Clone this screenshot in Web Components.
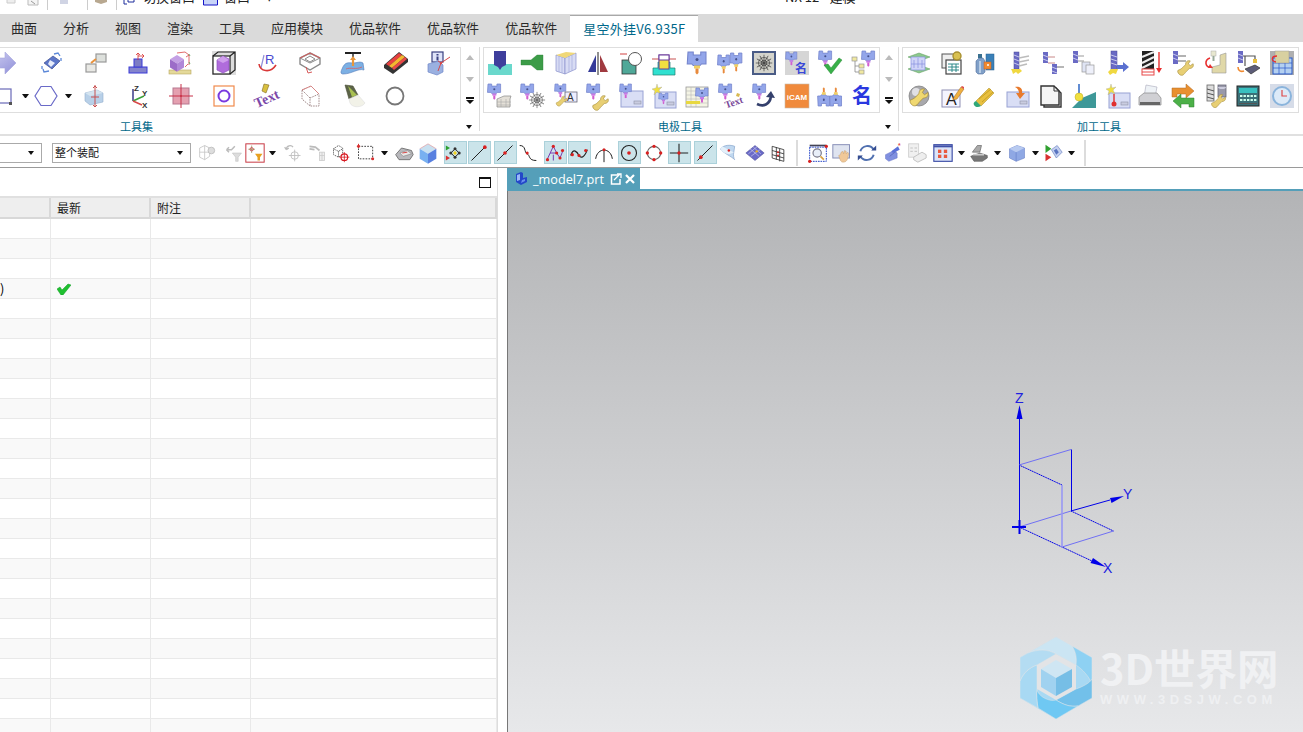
<!DOCTYPE html>
<html lang="zh"><head><meta charset="utf-8"><title>NX 12 - 建模</title>
<style>html,body{margin:0;height:100%;overflow:hidden;background:#fff;font-family:"Noto Sans CJK SC","Noto Sans",sans-serif}</style>
</head><body>
<nx-app>
  <nx-topbar></nx-topbar>
  <nx-tabs></nx-tabs>
  <nx-ribbon>
    <nx-group label="工具集" w="500" bx="481" ml="-20" chev="1" lo="84">
      <nx-strip origin="-20" items="arrowR@5 diamond@52 twoBox@96 baseBlock@138 rulerCube@180 wireCube@224 radius@267 wireTray@310 surfLift@353 stripes@396 infoBox@439"></nx-strip>
      <nx-strip origin="-20" items="rectC@0 caret@25 hexa@46 caret@68 blockAxis@94 xyz@137 pinkCross@181 orangeO@224 textPen@267 dotBox@310 lamp@353 ring@395"></nx-strip>
    </nx-group>
    <nx-group label="电极工具" w="419" bx="396" pl="4" chev="1" lo="2">
      <nx-strip origin="484" items="eDark@500 eGreen@533 book@566 mirror@598 tealCirc@631 yellowPit@664 e1@697 e2@730 web!!@764 eName@797 eCheck@830 eTree@863"></nx-strip>
      <nx-strip origin="484" items="eStack@500 eWeb@533 eAWrench@566 eWrench@598 eBox@631 eStarBox@664 eTable@697 eText@730 eArrow@764 icam@797 e2Up@830 nameBlue@863"></nx-strip>
    </nx-group>
    <nx-group label="加工工具" w="404" bx="396" pl="4" nosep="1" lo="4">
      <nx-strip origin="903" items="planes@919 docsGear@952 spray@985 drillLines@1018 drillSteps@1052 drillDocs@1083 drillArrow@1117 hatchArrow@1152 drillWrench@1183 machRed@1215 drillMach@1248 machGrid@1282"></nx-strip>
      <nx-strip origin="903" items="wrenchBall@919 aPen@952 eraser@985 boxArrow@1018 pages@1051 slope@1084 starBoxRed@1118 printer@1150 swap@1183 toolWrench@1216 calc@1248 clock@1282"></nx-strip>
    </nx-group>
  </nx-ribbon>
  <nx-toolbar>
    <nx-select w="52" ml="-10"></nx-select>
    <nx-select w="139" ml="10">整个装配</nx-select>
    <nx-strip origin="191" tool="1" items="tGhost1@208 tGhost2@234 tFilterBox@255 caret@272 tGhost3@293 tGhost4@317 tDotRed@341 tDashRect@366 caret@384 tBrick@404 tCube@428 tSnap!@455 tLineEnd!@479 tLineMid!@505 tCurve@528 tPts!@555 tWave!@579 tArc@604 tCenter!@629 tQuad@654 tCross!@679 tOnLine!@705 tFace@728 tMesh@755 tGrid@778 sep@797 tZoomBox@818 tHand@842 tRotate@867 tArrowBox@893 tGhost5@917 tLayout@943 caret@961 tPrintG@979 caret@997 tSolid@1017 caret@1035 tMark@1053 caret@1071 sep@1085"></nx-strip>
  </nx-toolbar>
  <nx-main>
    <nx-table></nx-table>
    <nx-viewport></nx-viewport>
  </nx-main>
</nx-app>
<script>
const P=(d,f,s,w)=>`<path d="${d}" fill="${f||'none'}"${s?` stroke="${s}" stroke-width="${w||1}"`:''}/>`;
const L=(d,s,w)=>P(d,'none',s,w);
const R=(x,y,w,h,f,s,sw)=>`<rect x="${x}" y="${y}" width="${w}" height="${h}" fill="${f||'none'}"${s?` stroke="${s}" stroke-width="${sw||1}"`:''}/>`;
const C=(x,y,r,f,s,sw)=>`<circle cx="${x}" cy="${y}" r="${r}" fill="${f||'none'}"${s?` stroke="${s}" stroke-width="${sw||1}"`:''}/>`;
const T=(x,y,z,f,t,b,extra)=>`<text x="${x}" y="${y}" font-size="${z}" fill="${f}" font-weight="${b||400}" font-family="Liberation Sans,Noto Sans CJK SC,sans-serif" ${extra||''}>${t}</text>`;
const G=(tx,ty,s,c)=>`<g transform="translate(${tx} ${ty}) scale(${s})">${c}</g>`;
const LG=(id,a,b)=>`<defs><linearGradient id="${id}" x1="0" y1="0" x2="1" y2="1"><stop offset="0" stop-color="${a}"/><stop offset="1" stop-color="${b}"/></linearGradient></defs>`;
const cube=(x,y,s,a,b,c)=>P(`M${x} ${y+s*.3}L${x+s*.5} ${y}L${x+s} ${y+s*.3}L${x+s*.5} ${y+s*.6}z`,a)+P(`M${x} ${y+s*.3}L${x+s*.5} ${y+s*.6}V${y+s*1.2}L${x} ${y+s*.9}z`,b)+P(`M${x+s} ${y+s*.3}L${x+s*.5} ${y+s*.6}V${y+s*1.2}L${x+s} ${y+s*.9}z`,c);
const E=(x,y,s,tip1,tip2)=>G(x,y,s,P('M0 0h3.5v2h5v-2h3.5v8h-3l-1 1h-4.500l-1-1h-3z','#93a6ea','#7484cc',.7)+C(6,5,1,'#44508a')+R(4,9,4,2,tip1||'#c47be6')+P('M5 11h2v3l-1 1-1-1z',tip2||'#d35fd0'));
const wrench=(x,y,s,c)=>G(x,y,s,P('M2 12c2-1 3-1 5-3l3-3c0-3 2-5 5-4l-2 3 2 2 3-2c1 3-1 5-4 5l-3 3c-2 2-2 3-4 4-3 1-6-3-5-5z',c||'#e8cf74','#a88f3c',.7));
const web=(x,y,s,c)=>G(x,y,s,[0,30,60,90,120,150].map(a=>`<line x1="-9" x2="9" transform="rotate(${a})" stroke="${c}" stroke-width=".8"/>`).join('')+C(0,0,3,'',c,.8)+C(0,0,6,'',c,.8));
const boxPanel=(x,y,w,h)=>R(x,y,w,h,'#d9def5','#98a2d4')+R(x+w-9,y+h-6,7,3,'#c9cce0','#8d90a6',.6);
const I={
arrowR:LG('a','#d4d4f4','#8f8fd8')+P('M-7 7h19V1l11 11-11 11v-6H-7z','url(#a)','#a4a4dc',.6),
diamond:P('M4 12l9-7 7 5-8 8z','#5c76c8','#3f4f90',.7)+P('M10 9l5 3-4 4-3-3z','#e8edfa')+L('M14 3l4-1 2 3M3 18l1 3 5-1M2 15v3M21 7v3','#5c88d8',1.3),
twoBox:R(12,3,10,8,'#dde0dc','#999',1.2)+R(2,13,10,8,'#e8e8e4','#999',1.2)+L('M7 12l5-4','#e8923c',2),
baseBlock:R(3,16,18,6,'#8484cc','#3a3ad8',1)+R(8,8,8,8,'#7c7cc4','#3a3ad8',1)+L('M12 9V2M12 2l-2 2M12 2l2 2M12 5h6M18 5l-2-2M18 5l-2 2','#d83030',.8),
rulerCube:R(1,19,22,4,'#e4d99a','#b8a860',.6)+cube(2,4,14,'#c4a0e4','#9c6cc8','#b088d8')+L('M9 2l8-1 4 3v10M21 4l-3 2M20 13l-3 3','#d84848',.8)+L('M21 3l1 2M21 11l1 2','#50a050',.8),
wireCube:R(0,0,24,24,'#dcdcdc')+R(1,5,17,18,'#fff','#222',1.2)+L('M1 5l5-4h17v18l-5 4M18 5l5-4','#222',1.2)+P('M5 9l6-4 6 3v11l-6 3-6-3z','#b06cdc','#8e50c0',.7)+P('M5 9l6 3 6-3-6-4z','#cf9eec'),
radius:T(10,13,13,'#4a4ad0','R',400)+L('M9 4l-3 13','#9090d8',1.2)+L('M4 13c1 7 11 10 17 1','#d83838',1.6),
wireTray:L('M12 2l10 5v6l-10 6-10-6V7z','#8a8a8a',1.4)+L('M2 7l10 5 10-5M7 8l5-3 5 3-5 3zM12 2v2','#8a8a8a',1)+L('M2 7l10-5 10 5','#d85858',1)+L('M8 16l2 6M10 22l4-1','#d85858',1),
surfLift:R(4,1,16,2,'#222')+L('M12 3v3','#222',1.4)+P('M1 18c3-8 7-6 11-6s7-2 10 0l1 7c-6-2-12 4-21 4-3 0-2-3-1-5z','#7cb0e4','#5078b8',.6)+L('M12 15V7','#e8963c',2.200)+P('M9 9l3-4 3 4z','#e8963c')+L('M5 18c4-2 10 1 16-2','#d86060',.8),
stripes:P('M0 14L15 1l9 7v3L9 23l-9-6z','#333')+P('M2 13L15 2l3 2L5 15z','#e84040')+P('M5 15L18 4l3 2L8 17z','#f4b830')+P('M8 17L21 6l2 2L10 19z','#e84848'),
infoBox:R(5,1,11,10,'#dfe3f8','#3a4080',1.2)+R(9.500,3,2,1.500,'#3a4080')+R(9.500,5.500,2,4,'#3a4080')+P('M1 13l11-3 4 4v7l-6 3-9-3z','#9ab0e0','#7088c8',.7)+L('M11 20l3-8 9-6M14 12l-3-2','#d84848',1)+C(14,12,1.200,'#d84848'),
rectC:R(1,5,22,14,'#fff','#6a6ab8',1.2)+R(21,18,3,3,'#555'),
hexa:P('M7 2.500h10L23 12l-6 9.500H7L1 12z','#fff','#6a6ac8',1.2),
blockAxis:P('M3 9l12-3 6 3v9l-13 3-5-4z','#b8d0e8','#94aecc',.6)+P('M3 9l5 3 13-3-6-3z','#d4e4f0')+L('M13 1v22M9 13l8 0','#c85050',1)+L('M11 4l2-2 2 2M11 21l2 2 2-2','#c85050',1),
xyz:L('M8 17V5','#3a3a8a',1.5)+L('M8 17l11-5','#3aa03a',1.5)+L('M8 17l9 4','#d84848',1.5)+T(9,7,8,'#333','Z',700)+T(17,12,8,'#333','Y',700)+T(17,24,8,'#333','X',700),
pinkCross:R(4,4,16,16,'#e4a0b0','#b87890',1)+L('M12 0v24M0 12h24','#c83048',1)+C(12,12,1,'#c83048'),
orangeO:R(2,2,20,20,'#fff','#f08a4c',1.2)+C(12,12,5.500,'#fff','#7a3ae0',2),
textPen:G(12,13,1,`<text transform="rotate(-24)" x="-14" y="6" font-size="14" font-weight="700" font-family="Liberation Serif,serif" fill="#7c48a8">Text</text>`)+P('M9 0l5 1-3 8-4-2z','#d8c040','#806820',.6),
dotBox:`<g stroke-dasharray="1.500 1">`+L('M4 6l9-4 8 8v12l-9 0-8-7zM4 6l8 8v8M12 14l9-4','#a08888',1)+`</g>`+L('M4 6l9-4 8 8','#d88888',1),
lamp:P('M4 1l8 1 5 9-9 4z','#5c6448','#484c34',.6)+P('M7 2l4 11 5-2','#a8c050')+P('M8 15l9-4 7 8c-3 5-13 5-15 0z','#f2f2e8','#ddd',.6),
ring:C(12,12,8.500,'#fff','#777',1.800),
eDark:R(0,13,24,11,'#6ad8cc')+P('M6 0h12v14l-4 2-2 3-2-3-4-2z','#3e3e9c'),
eGreen:P('M0 9h10l6-5h6v15h-6l-6-5H0z','#3c9c48','#2c8038',.4),
book:P('M2 4l9 3v16l-9-3z','#d8dcf4','#8a90cc',.7)+P('M22 2l-11 5v16l11-5z','#d8dcf4','#8a90cc',.7)+P('M2 4l10-3 10 1-11 5z','#f0d878')+L('M5 5v16M8 6v16M15 5v16M18 4v16','#a0a4d8',.6),
mirror:P('M10 4v17H2z','#343a98')+P('M14 4v17h8z','#a03a40')+L('M12 1v23','#222',1),
tealCirc:R(3,9,14,14,'#4fa898','#333',.8)+C(16,8,6.500,'#fff','#555',1)+L('M1 3h7','#d86060',1.2),
yellowPit:L('M0 8h24','#c85050',1)+P('M1 17h5v-6h12v6h5v7H1z','#30e0d0','#208070',.7)+R(7,4,10,14,'#f0e040','#6a3a9a',1)+R(7,4,10,5,'#fff','#6a3a9a',1),
e1:E(3,1,1.500,'#f0d060','#e88a3c'),
e2:`<g transform="translate(0 4) scale(.95 1.25)">${E(0,0,1,'#f0d060','#e88a3c')}</g><g transform="translate(12.500 2) scale(.95 1.25)">${E(0,0,1,'#f0d060','#e88a3c')}</g>`,
eName:R(0,0,24,24,'#d6d6d6')+E(1,1,.9)+T(10,22,12,'#3a48d8','名',700),
eCheck:E(1,0,1.050)+P('M6 14l4-1 3 4 8-10 3 2-11 14z','#38b048','#2a8a38',.5),
eTree:E(11,0,1.050)+R(1,6,5,4,'#f0e8a0','#999',.7)+R(8,13,5,4,'#f0e8a0','#999',.7)+R(8,19,5,4,'#f0e8a0','#999',.7)+L('M4 10v11h4M4 15h4','#888',.8),
eStack:E(0,0,1.050)+P('M9 15l7-3h7l-1 3v8H9z','#e4e0d8','#888',.7)+L('M9 18h14M9 21h14M13 15v8M18 15v8','#aaa',.6),
eWeb:E(0,0,1.050)+web(16,16,.9,'#666'),
eAWrench:E(1,0,.9)+R(11,8,12,10,'#eef','#667',.8)+T(13,17,10,'#333','A')+wrench(1,11,.65),
eWrench:E(1,0,1.050)+wrench(5,10,.95),
eBox:boxPanel(2,7,22,16)+E(1,0,.95),
eStarBox:boxPanel(3,8,21,16)+P('M5 0l1 4 4-1-3 3 2 4-4-2-3 3 1-4-3-2 4-1z','#f0e040','#aaa',.4)+E(7,9,.75),
eTable:R(1,3,22,20,'#f4f4e4','#999',.8)+L('M1 7h22M1 11h22M1 15h22M1 19h22M6 3v20M11 3v20','#bbb',.6)+R(1,17,14,3,'#e8d840')+E(11,4,1),
eText:E(1,0,1.050)+`<text transform="rotate(-20 15 20)" x="7" y="22" font-size="10" font-weight="700" font-family="Liberation Serif,serif" fill="#7a4a9a">Text</text>`+P('M19 9l3 1-1 3-3-1z','#d8b850'),
eArrow:E(1,0,1.050)+L('M5 20c6 3 13 1 14-8','#34406c',2.600)+P('M14 13l5-6 4 7z','#34406c'),
icam:R(0,0,24,24,'#f08a3c','#c8b8a8',.6)+T(12,15.500,8,'#fff','iCAM',700,'text-anchor="middle"'),
e2Up:`<g transform="translate(12 22) scale(.95 -1.25) translate(-12.500 0)">${E(0,0,1,'#f0d060','#e88a3c')}</g><g transform="translate(24 22) scale(.95 -1.25) translate(-12.500 0)">${E(0,0,1,'#f0d060','#e88a3c')}</g>`,
nameBlue:T(1,19,20,'#2a38e0','名',700),
planes:P('M1 6l11-4 11 4-11 4z','#8cc88c','#5a9a5a',.5)+P('M1 18l11-4 11 4-11 4z','#8cc88c','#5a9a5a',.5)+R(4,6,14,13,'#d0d4f8','#8890e0',.7)+L('M7 9v8M11 7v10M15 9v8M4 13h14','#8890e0',.7),
docsGear:R(2,3,12,14,'#eee','#555',1)+R(6,9,15,14,'#fff','#444',1.2)+L('M8 13h11M8 16h11M8 19h11M12 13v8M16 13v8','#2f8a8a',1)+C(17,5,4,'#d8c050','#a89030',1.400),
spray:P('M3 10l3-3h4l2 3v11l-2 2H5l-2-2z','#80a0c8','#5070a0',.6)+R(5,3,4,4,'#3a7090')+L('M7 10v12','#d0e0f0',1.400)+R(13,3,8,16,'#3a80b8','#2a6090',.5)+R(11,11,7,7,'#f08a30','#c86020',.5)+C(15,14,1,'#fff'),
drillLines:R(8,1,5,17,'#6a6ac4','#484898',.5)+L('M8 4l5 2M8 8l5 2M8 12l5 2','#c8c8ec',1)+P('M5 18h9l2 2-4 3-2-2-3 2-1-3z','#f0d840')+L('M13 7l10-2M13 11l10-2M13 15l8-2','#bcbcbc',1.600),
drillSteps:R(3,1,5,11,'#6a6ac4')+L('M3 4l5 2M3 8l5 2','#c8c8ec',1)+L('M8 6h7M8 12h7','#c88888',1)+R(12,13,5,10,'#6a6ac4')+L('M12 16l5 2M12 20l5 2','#c8c8ec',1)+L('M17 16h7','#999',1.400),
drillDocs:R(2,0,5,12,'#6a6ac4')+L('M2 3l5 2M2 7l5 2','#c8c8ec',1)+L('M7 5h6M7 10h6','#999',1)+R(11,11,8,10,'#dfe4f4','#999',.7)+R(15,14,8,9,'#eef0fa','#999',.7),
drillArrow:R(6,0,6,19,'#6a6ac4','#484898',.5)+L('M6 4l6 2M6 8l6 2M6 12l6 2','#c8c8ec',1)+P('M3 21l3-3h7l-2 5-3-1-3 2z','#f0d840')+P('M12 14h6v-3l6 5-6 5v-3h-6z','#5a70d0'),
hatchArrow:R(2,0,12,18,'#222')+L('M2 6l12-5M2 12l12-6M2 17l12-6','#eee',2)+R(2,18,12,6,'#fff','#e84848',1)+L('M2 21h12','#e84848',1)+L('M19 1v18','#e83030',1.400)+P('M16 17h6l-3 5z','#e83030'),
drillWrench:R(2,0,5,13,'#6a6ac4')+L('M2 3l5 2M2 7l5 2','#c8c8ec',1)+L('M7 5h8M7 10h8','#999',1.400)+wrench(5,8,.95),
machRed:P('M9 16l8-2V4l6-2v20H9z','#e0d8a8','#999',.6)+R(8,0,5,5,'#e8e8d0','#aaa',.5)+R(9.500,5,2,5,'#9a9')+L('M7 7C1 9 2 17 8 16','#e83030',1.600)+P('M7 13l3 4-5 0z','#e83030'),
drillMach:R(2,0,5,12,'#6a6ac4')+L('M2 3l5 2M2 7l5 2','#c8c8ec',1)+L('M7 5h12v4M9 5v10','#555',1.200)+R(17,8,4,4,'#e8c040')+P('M9 18l10-4 5 3-9 6z','#5c5c78','#333',.7)+L('M2 16c0 4 3 5 6 4','#f08a30',1.600),
machGrid:R(0,0,24,24,'#b0b0b0')+R(3,7,19,16,'#b4d0f0','#2858c8',1)+L('M3 12h19M3 17h19M9 7v16M15 7v16','#2858c8',.7)+R(5,0,14,12,'#d8d0a0','#999',.5)+L('M7 5C1 5 1 10 6 11','#e83030',1.400),
wrenchBall:C(12,12,10,'#a8a8ac','#777',.7)+C(9,8,4,'#e0e0e4')+wrench(1,3,1.100,'#f0d870'),
aPen:R(2,6,18,17,'#f4f4ff','#9090b4',1)+T(6,21,16,'#222','A',400)+P('M14 13l7-10 3 2-7 10-4 1z','#f0b040','#a06820',.5)+P('M21 3l3 2 0-2-2-1z','#e04848'),
eraser:P('M3 17L16 4l5 5L8 22z','#e8c040','#a88a20',.5)+L('M6 15L18 5M9 18L20 8','#c09820',.8)+P('M3 17l5 5c-3 2-6 1-7-1s0-3 2-4z','#30a878'),
boxArrow:boxPanel(1,8,22,15)+P('M9 3c5-1 8 2 7 6h3l-5 6-4-6h3c0-3-2-5-4-6z','#e87a2c'),
pages:P('M5 4h12l5 5v14H5z','#eee','#333',1.400)+P('M2 2h13l5 5v14H2z','#f4f4f4','#333',1.400)+L('M15 2v5h5','#333',1),
slope:P('M0 24l10-10 14-6v16z','#3e9898')+L('M7 0v10','#3a70c8',1.600)+C(7,13,4,'#f0e040','#c0a820',.5),
starBoxRed:boxPanel(3,9,21,15)+P('M5 0l1 4 4-1-3 3 2 4-4-2-3 3 1-4-3-2 4-1z','#f0e040','#aaa',.4)+L('M8 10v10','#e03030',1.400)+C(8,20,2.500,'#e03030'),
printer:P('M8 1l11 2-2 10H6z','#eef2f6','#aab',.6)+P('M1 13l5-4h13l4 5v7H1z','#d0d0d4','#888',.7)+R(2,18,20,3,'#666'),
swap:P('M1 4h14V0l8 7-8 7v-4H6v3H1z','#e89030','#b06820',.5)+P('M23 14H10v-4l-8 7 8 7v-4h8v3h5z','#4cb048','#2c8030',.5),
toolWrench:R(3,1,7,16,'#ddd','#666',.8)+L('M3 5l7 2M3 9l7 2M3 13l7 2','#555',1)+R(14,1,8,12,'#99a','#667',.8)+P('M14 3a4 2 0 008 0','#ccd')+wrench(6,9,.85),
calc:R(1,2,22,20,'#3a7078','#222',1)+R(3,4,18,5,'#38c0c0')+[0,1,2,3,4].map(i=>R(4+i*3.500,11,2.400,2,'#cfe')+R(4+i*3.500,15,2.400,2,'#cfe')).join('')+R(3,19,18,1,'#555'),
clock:R(0,0,24,24,'#d6dce8')+C(12,12,9,'#dceaf8','#8ab4dc',2)+L('M12 6v6h5','#e04848',1.200),
web:web(12,12,1.100,'#444'),
tGhost1:L('M2 6l6-3 6 3v10l-6 4-6-3zM8 3v17M2 11h12','#c4c4c4',1)+C(16,9,4,'#ddd','#bbb',1),
tGhost2:L('M3 8h6l4-4M3 8l3-3M3 8l3 3','#bbb',1.800)+P('M10 12h11l-4 5v5h-3v-5z','#ddd','#bbb',.6),
tFilterBox:R(1,1,22,22,'#fff','#c83a44',1.200)+L('M8 3v9M4 7.500h8','#884',.8)+C(8,7.500,2,'','#c83a44',1)+P('M12 13h9l-3 4v4h-3v-4z','#e8a020'),
tGhost3:L('M4 8c0-5 6-6 8-3M4 8l-2-3M4 8l3-2','#bbb',1.500)+C(14,15,4.500,'','#bbb',1)+L('M14 8v14M7 15h14','#bbb',1),
tGhost4:L('M3 4l7 1 5 4M3 7l6 1','#bbb',2)+R(15,11,6,10,'#eee','#ccc',1)+L('M15 15h6M18 11v10','#ccc',1),
tDotRed:`<g stroke-dasharray="1.500 1">`+L('M3 7l6-4 5 3v8l-5 3-6-3zM9 10v7M3 7l6 3 5-3','#444',1)+`</g>`+C(16,17,4,'','#d81820',1.400)+L('M16 11v12M10 17h12','#d81820',1),
tDashRect:`<g stroke-dasharray="2 1.500">`+R(3,4,17,15,'','#444',1.200)+`</g>`+L('M3 1v5M1 4h4','#d83030',1.200)+C(20,19,1.800,'#d83030')+C(3,4,1.800,'#d83030'),
tBrick:P('M2 14l7-8 12 3 2 5-4 6H6z','#b8b8bc','#666',1)+P('M7 12l9-3 5 4-10 3z','#e8e8e8','#777',.6)+L('M10 12l6-1','#d84848',1.200),
tCube:cube(2,1,20,'#c8e0f0','#78b0f0','#5880e0')+L('M2 7l10-6 10 6','#e89090',.7),
tSnap:L('M7 12l5-5 5 5-5 5z','#222',1.200)+C(12,12,2,'#f0d020')+C(12,7,1.800,'#333')+C(12,17,1.800,'#333')+C(7,12,1.800,'#333')+C(17,12,1.800,'#333')+P('M1 3l5 3-5 3z','#2ca030')+P('M1 15l5 3-5 3z','#d83030'),
tLineEnd:L('M3 21L19 5','#222',1.200)+C(19,5,2.200,'#d82020'),
tLineMid:L('M3 21L21 3','#222',1.200)+C(12,12,2.200,'#d82020'),
tCurve:L('M2 3c8 0 5 8 9 10s1 8 11 8','#222',1.200)+C(11,12,1.800,'#d82020'),
tPts:L('M2 21L10 4l4 8-8 0M14 12l4 6 4-10M10 14v7','#7a3ab0',1.200)+[[3,20],[10,4],[14,12],[18,18],[21,9]].map(p=>C(p[0],p[1],1.900,'#d82020')).join(''),
tWave:L('M2 15c3-10 8-4 10 0s7 2 10-7','#222',1.400)+[[4,14],[12,15],[20,9]].map(p=>C(p[0],p[1],1.900,'#d82020')).join(''),
tArc:L('M2 19c2-14 18-14 20 0M12 8v15','#222',1.200)+C(12,8,1.800,'#d82020'),
tCenter:C(12,12,9,'','#222',1.300)+C(12,12,2.200,'#d82020'),
tQuad:C(12,12,8,'','#666',1.300)+[[12,4],[12,20],[4,12],[20,12]].map(p=>C(p[0],p[1],2,'#d82020')).join(''),
tCross:L('M1 12h22M12 1v22','#222',1.300)+C(12,12,2,'#d82020'),
tOnLine:L('M3 21L21 3','#222',1.200)+C(7,17,2.200,'#d82020'),
tFace:P('M3 7c4-5 12-5 17-3l-1 7c-1 3 0 8 1 9-4-4-14-8-17-13z','#c0d8f0','#80a0c8',.8)+P('M3 7c3 6 10 8 16 4-6-2-12-6-14-7z','#e4f0fa')+C(13,9,1.500,'#d82020'),
tMesh:P('M12 3l11 9-11 9L1 12z','#6a6ac8','#4a4a90',.6)+L('M6 7l11 9M10 5l9 8M7 16l11-8M4 13l11-9','#c8c8f0',.8)+C(14,10,1.400,'#e8b020'),
tGrid:P('M5 4l14 4v14L5 18z','#fff','#333',1)+L('M10 5v15M14 7v15M5 9l14 4M5 14l14 4','#333',1)+C(12,11,1.200,'#d82020')+C(12,15,1.200,'#d82020'),
tZoomBox:R(2,2,20,20,'#fff')+L('M2 3h20','#445',2)+`<g stroke-dasharray="2 1">`+R(2,5,20,17,'','#2848c8',1.200)+`</g>`+C(11,12,5,'#e8eef8','#778',1.400)+L('M15 16l4 4','#d8a040',2)+C(22,4,2,'#d82020')+C(2,22,2,'#d82020'),
tHand:R(1,2,20,16,'#dfe4f0','#8890b8',1.200)+P('M11 11l2-1 1 3 1-4 2 1v3l2-2 1 2-1 5c-1 4-3 5-6 5-2 0-3-2-4-5l-1-3 2-1z','#f0c898','#c09868',.5),
tRotate:L('M4 10C6 3 16 1 20 8M20 14C18 21 8 23 4 16','#5070b0',2.400)+P('M17 9h6V3z','#344c90')+P('M7 15H1v6z','#344c90'),
tArrowBox:P('M3 14l10-5 4 3v6l-10 4-4-3z','#8090e0','#5a68c0',.5)+L('M8 16l9-7','#4050a0',.6)+P('M10 10l8-6 2 4-8 4z','#5a70d8')+T(18,6,8,'#e04848','*',700),
tGhost5:R(2,1,12,16,'#f0f0f0','#ccc',1)+L('M4 6h3M4 10h3M9 6h3M9 10h3','#bbb',1)+P('M8 17l10-6 5 3v4l-10 5-5-3z','#eee','#bbb',1),
tLayout:R(1,2,22,20,'#dce4f8','#4050a8',1.400)+L('M1 4h22','#4050a8',2.400)+[6,13].map(x=>[8,14].map(y=>R(x,y,4,4,'#e85840')).join('')).join(''),
tPrintG:P('M2 16l11-4 9 3v3l-6 4H6z','#777','#444',.6)+P('M4 11l6-8h5l-2 8z','#aaa','#555',.7)+R(5,13,13,2,'#ccc'),
tSolid:P('M3 7l9-4 9 3v12l-10 4-8-4z','#8fa8e4','#5a74c0',.6)+P('M3 7l8 4 10-5-9-3z','#b8caf0')+L('M11 11v11','#5a74c0',.6),
tMark:P('M10 8l7-5 6 8-7 7z','#c4d0f0','#6a80c0',.8)+P('M13 9l3-2 3 4-3 3z','#5a74c0')+P('M3 2l7 5-7 5z','#30a030')+P('M3 13l7 4-7 5z','#d83030')
};
class NxIcon extends HTMLElement{constructor(){super();this.attachShadow({mode:'open'})}
 connectedCallback(){const n=this.getAttribute('name'),s=+this.getAttribute('size')||24;
  this.shadowRoot.innerHTML=`<style>:host{display:block;width:${s}px;height:${s}px;flex:none}svg{display:block;overflow:visible}</style><svg xmlns="http://www.w3.org/2000/svg" width="${s}" height="${s}" viewBox="0 0 24 24">${I[n]||''}</svg>`}}
customElements.define('nx-icon',NxIcon);
const tpl=(h,css)=>`<style>${css}</style>${h}`;
class NxStrip extends HTMLElement{constructor(){super();this.attachShadow({mode:'open'})}
 connectedCallback(){const tool=this.hasAttribute('tool');let cur=+this.getAttribute('origin');let h='';
  for(const it of this.getAttribute('items').split(/\s+/)){let [n,c]=it.split('@');c=+c;let hl=0;
   if(n.endsWith('!!')){n=n.slice(0,-2);hl=2}else if(n.endsWith('!')){n=n.slice(0,-1);hl=1}
   const w=n==='caret'?7:n==='sep'?2:tool?(hl?23:20):24;const ml=c-w/2-cur;cur=c+w/2;
   const st=`margin-left:${ml}px;width:${w}px`;
   if(n==='caret')h+=`<i class="caret" style="${st}"></i>`;
   else if(n==='sep')h+=`<i class="sep" style="${st}"></i>`;
   else h+=`<span class="c ${hl==1?'hl':hl==2?'hd':''}" style="${st}"><nx-icon name="${n}" size="${tool?20:(hl==2?20:24)}"></nx-icon></span>`;}
  this.shadowRoot.innerHTML=tpl(h,`:host{display:flex;align-items:center;height:${tool?24:33}px}
  .c{display:flex;align-items:center;justify-content:center;flex:none;box-sizing:border-box}
  .hl{height:23px;background:#cbe4ea;border:1px solid #abd1da}
  .hd{height:24px;background:#d4d4cc;border:2px solid #4a5c86}
  .caret{flex:none;height:0;border-left:3.5px solid transparent;border-right:3.5px solid transparent;border-top:4px solid #111;box-sizing:border-box;width:7px!important}
  .sep{flex:none;height:26px;background:#dcdcdc}`)}}
customElements.define('nx-strip',NxStrip);
class NxApp extends HTMLElement{constructor(){super();this.attachShadow({mode:'open'}).innerHTML=tpl('<slot></slot>',':host{display:flex;flex-direction:column;height:732px;width:1303px;overflow:hidden;background:#fff;color:#222;font-family:"Noto Sans CJK SC","Noto Sans",sans-serif}')}}
customElements.define('nx-app',NxApp);
class NxTop extends HTMLElement{constructor(){super();
 this.attachShadow({mode:'open'}).innerHTML=tpl(`
 <div class="g">
  <svg class="ic" style="margin-left:6px" width="10" height="5" viewBox="0 0 10 5"><path d="M1 0v3h8V0" fill="#eee" stroke="#ccc"/></svg>
  <svg class="ic" style="margin-left:11px" width="12" height="6" viewBox="0 0 12 6"><path d="M1 0v5h10V0" fill="#f4f4f4" stroke="#bbb"/><path d="M4 1l4 3" stroke="#999"/></svg>
  <i class="s" style="margin-left:8px"></i>
  <svg class="ic" style="margin-left:12px" width="8" height="5" viewBox="0 0 8 5"><path d="M0 0h8v4H0z" fill="#d0d4e4"/></svg>
  <i class="s" style="margin-left:19px"></i>
  <svg class="ic" style="margin-left:7px" width="12" height="4" viewBox="0 0 12 4"><path d="M0 0h12v2l-6 2-6-2z" fill="#b8a890"/></svg>
  <i class="s" style="margin-left:9px"></i>
  <svg class="ic" style="margin-left:6px" width="12" height="5" viewBox="0 0 12 5"><path d="M1 0v4h3M5 0v2h6V0" fill="#fff" stroke="#1c2c9c"/></svg>
  <span class="t" style="margin-left:8px">切换窗口</span>
  <svg class="ic" style="margin-left:8px" width="15" height="6" viewBox="0 0 15 6"><path d="M.5 0v5h14V0" fill="#c8d4f8" stroke="#1414c8"/></svg>
  <span class="t" style="margin-left:6px">窗口</span>
  <span class="t" style="margin-left:16px">▾</span>
  <span class="t ti">NX 12 - 建模</span>
 </div>`,`:host{display:block;height:14px;overflow:hidden;background:#fff;flex:none}
 .g{display:flex;align-items:flex-start;height:14px;position:relative}
 .ic{flex:none;display:block}.s{width:1px;height:10px;background:#ccc;flex:none}
 .t{font-size:13px;line-height:14px;margin-top:-10px;white-space:nowrap;color:#222}.ti{margin-left:512px}`)}}
customElements.define('nx-topbar',NxTop);
class NxTabs extends HTMLElement{constructor(){super();
 const tabs=['曲面','分析','视图','渲染','工具','应用模块','优品软件','优品软件','优品软件'];
 this.attachShadow({mode:'open'}).innerHTML=tpl(tabs.map(t=>`<span>${t}</span>`).join('')+'<span class="on">星空外挂V6.935F</span>',
 `:host{display:flex;height:28px;background:#dadada;flex:none;font-size:13px;box-sizing:border-box}
 span{padding:0 13px;line-height:28px;color:#2a2a2a;white-space:nowrap;flex:none}
 span:first-of-type{margin-left:-2px}
 .on{background:#fff;color:#00688a;margin-top:1px;line-height:26px;height:27px;border-top:1px solid #a8a8a8;box-sizing:border-box;letter-spacing:.28px}`)}}
customElements.define('nx-tabs',NxTabs);
class NxRibbon extends HTMLElement{constructor(){super();this.attachShadow({mode:'open'}).innerHTML=tpl('<slot></slot>',':host{display:flex;height:94px;box-sizing:border-box;padding-top:5px;border-bottom:2px solid #e0e0e0;flex:none;background:#fff}')}}
customElements.define('nx-ribbon',NxRibbon);
class NxGroup extends HTMLElement{constructor(){super();this.attachShadow({mode:'open'})}
 connectedCallback(){const a=k=>this.getAttribute(k);
 const cd='<i class="cd"></i>';
 const lpr=(a('nosep')?0:18)+2*(+a('lo')||0);
 this.shadowRoot.innerHTML=tpl(`<div class="top"><div class="box"><slot></slot></div><div class="sc"><i class="up"></i><i class="dn"></i><i class="mn"></i></div></div><div class="lb"><span>${a('label')}</span>${a('chev')?cd:''}</div>`,
 `:host{display:block;flex:none;box-sizing:border-box;width:${a('w')}px;height:84px;margin-left:${a('ml')||0}px;padding-left:${a('pl')||0}px;${a('nosep')?'':'border-right:1px solid #dcdcdc'}}
 .top{display:flex;height:66px}
 .box{box-sizing:border-box;height:66px;border:1.5px solid #dedede;overflow:hidden;flex:none;display:flex;flex-direction:column;margin-left:-1px;width:${+a('bx')+1}px}
 ::slotted(nx-strip){margin-top:-1.5px}
 ::slotted(nx-strip:last-child){margin-top:0}
 .sc{width:18px;position:relative;display:flex;flex-direction:column;align-items:center;${a('nosep')?'display:none':''}}
 .sc i{display:block;width:0;height:0;border-left:4px solid transparent;border-right:4px solid transparent;position:absolute}
 .up{border-bottom:5px solid #bbb;top:8px}.dn{border-top:5px solid #bbb;top:30px}
 .mn{border-top:4px solid #111;top:53px}.mn::before{content:"";position:absolute;left:-4px;top:-7px;width:8px;height:1.5px;background:#111}
 .lb{height:17px;position:relative;text-align:center;font-size:11px;line-height:27px;color:#00688a;padding-right:${lpr}px}
 .lb span{position:relative}
 .cd{position:absolute;right:7px;top:12px;border-left:3.5px solid transparent;border-right:3.5px solid transparent;border-top:4px solid #111}`)}}
customElements.define('nx-group',NxGroup);
class NxToolbar extends HTMLElement{constructor(){super();this.attachShadow({mode:'open'}).innerHTML=tpl('<slot></slot>',':host{display:flex;align-items:center;height:32px;box-sizing:border-box;padding-top:2px;border-bottom:1.5px solid #9a9a9a;flex:none;background:#fff}')}}
customElements.define('nx-toolbar',NxToolbar);
class NxSelect extends HTMLElement{constructor(){super();this.attachShadow({mode:'open'})}
 connectedCallback(){this.shadowRoot.innerHTML=tpl('<span><slot></slot></span><i></i>',
 `:host{display:flex;align-items:center;justify-content:space-between;box-sizing:border-box;width:${this.getAttribute('w')}px;margin-left:${this.getAttribute('ml')}px;height:20px;border:1.5px solid #aaa;font-size:11px;color:#111;padding:0 7px 0 2px;flex:none;background:#fff}
 i{width:0;height:0;border-left:3.5px solid transparent;border-right:3.5px solid transparent;border-top:4px solid #111}
 span{line-height:17px}`)}}
customElements.define('nx-select',NxSelect);
class NxMain extends HTMLElement{constructor(){super();this.attachShadow({mode:'open'}).innerHTML=tpl('<slot></slot>',':host{display:flex;flex:1;min-height:0}')}}
customElements.define('nx-main',NxMain);
class NxTable extends HTMLElement{constructor(){super();
 let rows='';for(let i=0;i<26;i++){rows+=`<div class="r ${i%2?'alt':''}"><div>${i==3?'<b>)</b>':''}</div><div>${i==3?'<svg width="14" height="12" viewBox="0 0 14 12"><path d="M0 6l3-2 2 3 6-6 3 1-8 10H4z" fill="#1fc030" stroke="#0d9a20" stroke-width=".5"/></svg>':''}</div><div></div><div></div></div>`}
 this.attachShadow({mode:'open'}).innerHTML=tpl(`<div class="bar"><i class="mx"></i></div><div class="r h"><div></div><div>最新</div><div>附注</div><div></div></div>${rows}`,
 `:host{display:block;width:498px;flex:none;border-right:1px solid #ddd;box-sizing:border-box;overflow:hidden}
 .bar{display:flex;justify-content:flex-end;align-items:center;padding-right:6px;border-bottom:2px solid #e0e0e0;box-sizing:border-box;height:30px}
 .mx{display:block;width:12px;height:11px;border:1px solid #111;border-top-width:2px;box-sizing:border-box}
 .r{display:grid;grid-template-columns:51px 100px 100px 1fr;height:20px;box-sizing:border-box;border-bottom:1px solid #e9e9e9}
 .r>div{border-right:1px solid #e9e9e9;display:flex;align-items:center;overflow:hidden}
 .r>div:nth-child(2){padding-left:6px}
 .alt{background:#f9f9f9}
 b{font-weight:400;font-size:13px;color:#000}
 .h{background:#eee;height:21px;border-bottom:2px solid #d8d8d8;font-size:12px;color:#222}
 .h>div{border-right:2px solid #d8d8d8}
 .h>div:nth-child(3){padding-left:6px}`)}}
customElements.define('nx-table',NxTable);
class NxViewport extends HTMLElement{constructor(){super();
 this.attachShadow({mode:'open'}).innerHTML=tpl(`
 <div class="tabs"><div class="tab">
  <svg width="15" height="15" viewBox="0 0 15 15"><path d="M2 3l5-2 2 1v5l4-1v5l-6 3-5-3z" fill="#2448c8"/><path d="M3 4l3-1v6l-3 1z" fill="#9ab8f8"/><path d="M8 9l3-1v2l-4 2z" fill="#6a90f0"/></svg>
  <span>_model7.prt</span>
  <svg width="12" height="12" viewBox="0 0 12 12"><path d="M8 2H1.500v9H10V6" fill="none" stroke="#fff" stroke-width="1.500"/><path d="M4 7l6-6M7 1h4v4" fill="none" stroke="#fff" stroke-width="1.300"/></svg>
  <svg width="10" height="10" viewBox="0 0 10 10"><path d="M1 1l8 8M9 1l-8 8" stroke="#fff" stroke-width="2.200"/></svg>
 </div></div>
 <div class="view">
  <svg class="axis" width="150" height="200" viewBox="1000 385 150 200">
   <g fill="none" stroke="#0000e8" stroke-width="1">
    <path d="M1019.500 527V410"/><path d="M1071.500 449.500V511"/>
    <path d="M1019 465L1071 449.500" stroke="#7070f4"/>
    <path d="M1019 465L1062 485" stroke-dasharray="1.500 .5"/>
    <path d="M1019 527L1071 511" stroke="#7070f4"/><path d="M1071 511L1110 500"/>
    <path d="M1019 527L1062 547L1092 561" stroke-dasharray="1.500 .5"/>
    <path d="M1071 511L1113.500 531" stroke-dasharray="1.500 .5"/>
    <path d="M1113.500 531L1062 547" stroke="#7070f4"/>
    <path d="M1062 485V547" stroke="#9898f4" stroke-width="1.600"/>
    <path d="M1012 527H1026M1019.500 520V534" stroke-width="2"/>
   </g>
   <path d="M1019.500 405l3 14h-6z" fill="#0000e8"/>
   <path d="M1124 496l-14 2 1.500 5z" fill="#0000e8"/>
   <path d="M1106 567l-13-9-2.500 5z" fill="#0000e8"/>
   <g font-family="Liberation Sans,sans-serif" font-size="14" fill="#2020e0">
    <text x="1015" y="403">Z</text><text x="1123" y="499">Y</text><text x="1103" y="573">X</text>
   </g>
  </svg>
  <div class="wm">
   <svg width="72" height="82" viewBox="0 0 72 82">
    <path d="M36 0L72 20.500V61L36 82L0 61V20.500z" fill="#a8d9f3"/>
    <g stroke="#e3e4e6" stroke-width=".5">
    <path d="M8 16L36 0L52 9C56 15 57 22 56 28L36 17C28 12 18 12 8 16z" fill="#cbe5f3"/>
    <path d="M52 9L72 20.500V48C70 40 62 32 56 28C57 22 56 15 52 9z" fill="#8ed1f3"/>
    <path d="M72 42V61L58 69C50 70 44 68 36 63L56 52C62 50 70 46 72 42z" fill="#72c0ea"/>
    <path d="M17 52C18 60 30 65 36 63C44 68 50 70 58 69L36 82L18 71C17 65 16 58 17 52z" fill="#6fc8f3"/>
    <path d="M0 44C3 36 10 30 17 28V52C16 58 17 65 18 71L0 61z" fill="#a8d9f3"/>
    <path d="M0 20.500L8 16C18 12 28 12 36 17L17 28C10 30 3 36 0 44z" fill="#b4dcf2"/>
    </g>
    <path d="M17 28L36 17L56 28V52L36 63L17 52z" fill="#e3e4e6"/>
    <path d="M21 32L36 23L52 32L36 41z" fill="#cfe6f3"/><path d="M21 32L36 41V59L21 50z" fill="#a0d2f0"/><path d="M52 32L36 41V59L52 50z" fill="#76bee6"/>
   </svg>
   <div class="wt"><div class="a">3D世界网</div><div class="b">WWW.3DSJW.COM</div></div>
  </div>
 </div>`,
 `:host{flex:1;display:flex;flex-direction:column;margin-left:9px;min-width:0;border-left:1px solid #777;box-sizing:border-box}
 .tabs{height:23px;flex:none;border-bottom:2px solid #559fb9;box-sizing:border-box;margin-left:-1px;background:#fff}
 .tab{width:133px;height:21px;background:#559fb9;display:flex;align-items:center;padding-left:7px;box-sizing:border-box;color:#fff;font:13px "Open Sans",sans-serif}
 .tab span{margin:0 5px 0 4px;white-space:nowrap;width:72px;flex:none;font-size:12.7px}
 .tab svg:last-child{margin-left:3px}
 .view{flex:1;position:relative;background:linear-gradient(#b3b4b6,#e7e8ea);overflow:hidden}
 .axis{position:absolute;left:492px;top:194px}
 .wm{position:absolute;left:512px;top:446px;display:flex;gap:8px;align-items:flex-start}
 .wm svg{flex:none;display:block}
 .wt{color:#f0f1f3;font-family:"Noto Sans CJK SC",sans-serif}
 .a{font-size:41.500px;font-weight:700;line-height:40px;margin-top:10px;white-space:nowrap;letter-spacing:0}
 .b{font:700 13px/12px "Liberation Sans",sans-serif;letter-spacing:4.55px;margin-top:7px;white-space:nowrap;color:#eff0f2}`)}}
customElements.define('nx-viewport',NxViewport);
</script>
</body></html>
